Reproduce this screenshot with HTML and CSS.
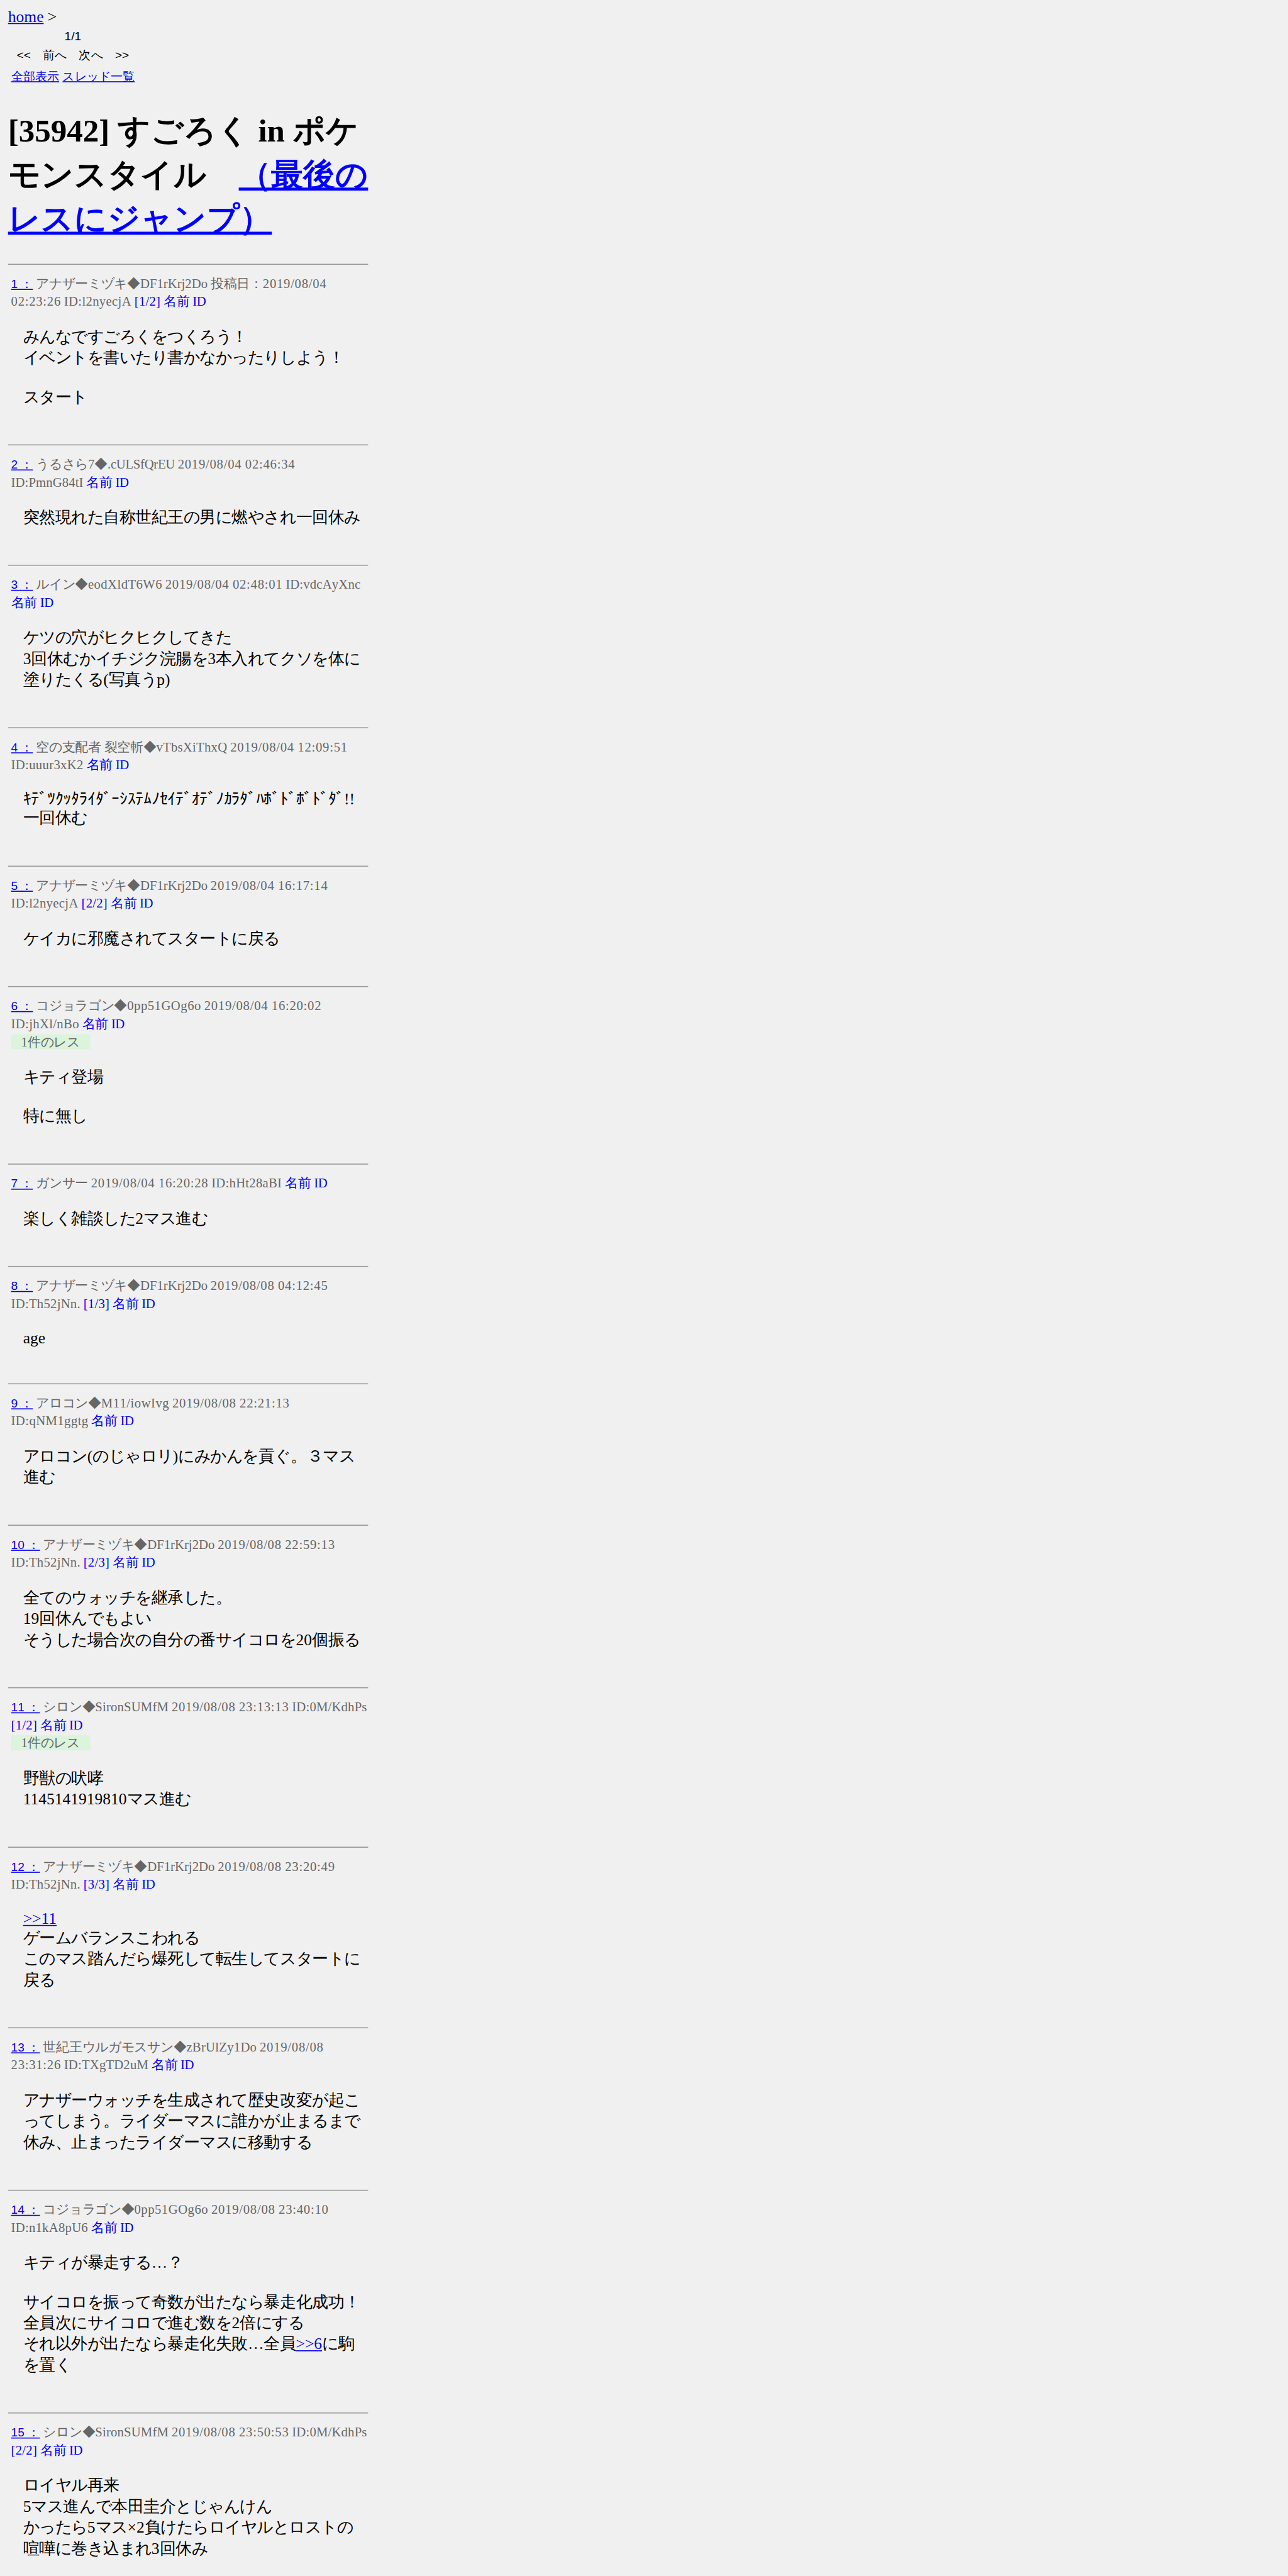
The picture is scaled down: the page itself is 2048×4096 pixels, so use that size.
FILE: index.html
```html
<!DOCTYPE html>
<html lang="ja">
<head>
<meta charset="utf-8">
<title>[35942] すごろく in ポケモンスタイル</title>
<link rel="stylesheet" href="styles.css">
</head>
<body>
<div class="screen">
<main class="page">
<div class="crumb"><a href="#">home</a> &gt;</div>
<table class="pager">
<tr><td class="center">1/1</td></tr>
<tr><td class="center">&lt;&lt;　前へ　次へ　&gt;&gt;</td></tr>
<tr><td><a href="#">全部表示</a> <a href="#">スレッド一覧</a></td></tr>
</table>
<h1 class="title">[35942] すごろく in ポケモンスタイル　<a href="#">（最後のレスにジャンプ）</a></h1>

<article class="post">
<div class="meta"><a class="no" href="#">1 ：</a> アナザーミヅキ◆DF1rKrj2Do 投稿日：<span class="date">2019/08/04</span><br><span class="date">02:23:26</span> <span class="t20">ID:l2nyecjA</span> <span class="act t15">[1/2]</span> <span class="act">名前</span> <span class="act id">ID</span></div>
<div class="text">みんなですごろくをつくろう！<br>イベントを書いたり書かなかったりしよう！<br><br>スタート</div>
</article>

<article class="post">
<div class="meta"><a class="no" href="#">2 ：</a> うるさら7◆<span class="tight">.cULSfQrEU</span> <span class="date">2019/08/04 02:46:34</span><br><span class="t05">ID:PmnG84tI</span> <span class="act">名前</span> <span class="act id">ID</span></div>
<div class="text">突然現れた自称世紀王の男に燃やされ一回休み</div>
</article>

<article class="post">
<div class="meta"><a class="no" href="#">3 ：</a> ルイン◆<span class="t25">eodXldT6W6</span> <span class="date">2019/08/04 02:48:01</span> <span class="t10">ID:vdcAyXnc</span><br><span class="act">名前</span> <span class="act id">ID</span></div>
<div class="text">ケツの穴がヒクヒクしてきた<br>3回休むかイチジク浣腸を3本入れてクソを体に塗りたくる(写真うp)</div>
</article>

<article class="post">
<div class="meta"><a class="no" href="#">4 ：</a> 空の支配者 裂空斬◆<span class="t15">vTbsXiThxQ</span> <span class="date">2019/08/04 12:09:51</span><br><span class="t20">ID:uuur3xK2</span> <span class="act">名前</span> <span class="act id">ID</span></div>
<div class="text">ｷﾃﾞﾂｸｯﾀﾗｲﾀﾞｰｼｽﾃﾑﾉｾｲﾃﾞｵﾃﾞﾉｶﾗﾀﾞﾊﾎﾞﾄﾞﾎﾞﾄﾞﾀﾞ!!<br>一回休む</div>
</article>

<article class="post">
<div class="meta"><a class="no" href="#">5 ：</a> アナザーミヅキ◆DF1rKrj2Do <span class="date">2019/08/04 16:17:14</span><br><span class="t20">ID:l2nyecjA</span> <span class="act t15">[2/2]</span> <span class="act">名前</span> <span class="act id">ID</span></div>
<div class="text">ケイカに邪魔されてスタートに戻る</div>
</article>

<article class="post">
<div class="meta"><a class="no" href="#">6 ：</a> コジョラゴン◆<span class="t30">0pp51GOg6o</span> <span class="date">2019/08/04 16:20:02</span><br><span class="t20">ID:jhXl/nBo</span> <span class="act">名前</span> <span class="act id">ID</span><br><span class="replies">1件のレス</span></div>
<div class="text">キティ登場<br><br>特に無し</div>
</article>

<article class="post">
<div class="meta"><a class="no" href="#">7 ：</a> ガンサー <span class="date">2019/08/04 16:20:28</span> <span class="t15">ID:hHt28aBI</span> <span class="act">名前</span> <span class="act id">ID</span></div>
<div class="text">楽しく雑談した2マス進む</div>
</article>

<article class="post">
<div class="meta"><a class="no" href="#">8 ：</a> アナザーミヅキ◆DF1rKrj2Do <span class="date">2019/08/08 04:12:45</span><br><span class="t15">ID:Th52jNn.</span> <span class="act t15">[1/3]</span> <span class="act">名前</span> <span class="act id">ID</span></div>
<div class="text">age</div>
</article>

<article class="post">
<div class="meta"><a class="no" href="#">9 ：</a> アロコン◆<span class="t30">M11/iowIvg</span> <span class="date">2019/08/08 22:21:13</span><br><span class="t25">ID:qNM1ggtg</span> <span class="act">名前</span> <span class="act id">ID</span></div>
<div class="text">アロコン(のじゃロリ)にみかんを貢ぐ。３マス進む</div>
</article>

<article class="post">
<div class="meta"><a class="no t10" href="#">10 ：</a> アナザーミヅキ◆DF1rKrj2Do <span class="date">2019/08/08 22:59:13</span><br><span class="t15">ID:Th52jNn.</span> <span class="act t15">[2/3]</span> <span class="act">名前</span> <span class="act id">ID</span></div>
<div class="text">全てのウォッチを継承した。<br>19回休んでもよい<br>そうした場合次の自分の番サイコロを20個振る</div>
</article>

<article class="post">
<div class="meta"><a class="no eleven" href="#">11 ：</a> シロン◆<span class="t10">SironSUMfM</span> <span class="date">2019/08/08 23:13:13</span> <span class="t10">ID:0M/KdhPs</span><br><span class="act t15">[1/2]</span> <span class="act">名前</span> <span class="act id">ID</span><br><span class="replies">1件のレス</span></div>
<div class="text">野獣の吠哮<br>1145141919810マス進む</div>
</article>

<article class="post">
<div class="meta"><a class="no t10" href="#">12 ：</a> アナザーミヅキ◆DF1rKrj2Do <span class="date">2019/08/08 23:20:49</span><br><span class="t15">ID:Th52jNn.</span> <span class="act t15">[3/3]</span> <span class="act">名前</span> <span class="act id">ID</span></div>
<div class="text"><a href="#">&gt;&gt;11</a><br>ゲームバランスこわれる<br>このマス踏んだら爆死して転生してスタートに戻る</div>
</article>

<article class="post">
<div class="meta"><a class="no t10" href="#">13 ：</a> 世紀王ウルガモスサン◆<span class="t15">zBrUlZy1Do</span> <span class="date">2019/08/08</span><br><span class="date">23:31:26</span> <span class="t10">ID:TXgTD2uM</span> <span class="act">名前</span> <span class="act id">ID</span></div>
<div class="text">アナザーウォッチを生成されて歴史改変が起こってしまう。ライダーマスに誰かが止まるまで休み、止まったライダーマスに移動する</div>
</article>

<article class="post">
<div class="meta"><a class="no t10" href="#">14 ：</a> コジョラゴン◆<span class="t30">0pp51GOg6o</span> <span class="date">2019/08/08 23:40:10</span><br><span class="t15">ID:n1kA8pU6</span> <span class="act">名前</span> <span class="act id">ID</span></div>
<div class="text">キティが暴走する…？<br><br>サイコロを振って奇数が出たなら暴走化成功！<br>全員次にサイコロで進む数を2倍にする<br>それ以外が出たなら暴走化失敗…全員<a href="#">&gt;&gt;6</a>に駒を置く</div>
</article>

<article class="post">
<div class="meta"><a class="no t10" href="#">15 ：</a> シロン◆<span class="t10">SironSUMfM</span> <span class="date">2019/08/08 23:50:53</span> <span class="t10">ID:0M/KdhPs</span><br><span class="act t15">[2/2]</span> <span class="act">名前</span> <span class="act id">ID</span></div>
<div class="text">ロイヤル再来<br>5マス進んで本田圭介とじゃんけん<br>かったら5マス×2負けたらロイヤルとロストの喧嘩に巻き込まれ3回休み</div>
</article>
</main>
</div>
</body>
</html>
```

FILE: styles.css
```css
body {
  margin: 0;
  background: #f0f0f0;
  color: #000;
  font-family: "Liberation Serif", serif;
  font-size: 16px;
}

.screen {
  height: 4096px;
  overflow: hidden;
}

/* Laid out at phone width, then enlarged as a whole. */
.page {
  box-sizing: border-box;
  width: 375px;
  padding: 8px;
  transform: scale(1.595);
  transform-origin: 0 0;
}

a {
  color: #00e;
  text-decoration: underline;
}

.pager {
  font-family: "Liberation Sans", sans-serif;
  font-size: 12px;
}

.center {
  text-align: center;
}

.title {
  margin: 21px 0 22px;
  font-size: 32px;
}

.title a {
  color: #00f;
}

.post {
  border-top: 1px solid #999;
  padding: 10px 0 36px;
}

.meta {
  padding-left: 3px;
  color: #666;
  font-size: 13px;
  font-kerning: none;
  word-spacing: -0.25px;
  white-space: nowrap;
}

.no {
  font-family: "Liberation Sans", sans-serif;
  font-size: 12px;
}

.act {
  color: #00e;
}

/* Tracking of the Latin runs in the post headers. */
.date { letter-spacing: 0.45px; }
.id { letter-spacing: -0.3px; }
.tight { letter-spacing: -0.2px; }
.t05 { letter-spacing: 0.05px; }
.t10, .eleven { letter-spacing: 0.1px; }
.t15 { letter-spacing: 0.15px; }
.t20 { letter-spacing: 0.2px; }
.t25 { letter-spacing: 0.25px; }
.t30 { letter-spacing: 0.3px; }

.replies {
  padding: 0 10px;
  border-radius: 1px;
  background: #dcf3dc;
}

.text {
  width: 341px;
  margin: 16px 0 0 15px;
}
```
